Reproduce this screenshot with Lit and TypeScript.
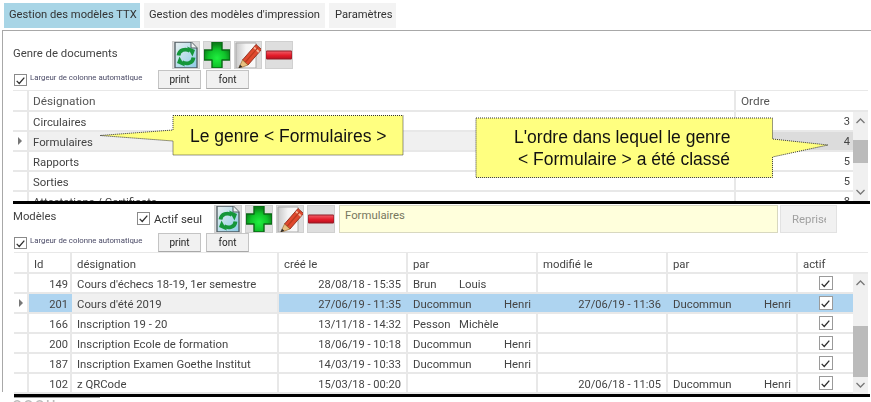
import { LitElement, html, css, svg } from "lit";
import { customElement } from "lit/decorators.js";

const refreshIcon = html`<svg viewBox="0 0 28 28" width="28" height="28">
  <defs><linearGradient id="pg" x1="0" y1="0" x2="1" y2="1"><stop offset="0" stop-color="#e9f0f0"/><stop offset="1" stop-color="#8ccbe6"/></linearGradient></defs>
  <path d="M3 1H19L25 7V27H3Z" fill="url(#pg)" stroke="#4f5a60" stroke-width="1.3"/>
  <path d="M19 1V7H25" fill="#eef2f2" stroke="#4f5a60" stroke-width="1"/>
  <path d="M6.5 14.5C7 9 13.5 7 18 10" fill="none" stroke="#15963a" stroke-width="3.8"/>
  <path d="M15 5.5L23 9L20.5 15.5Z" fill="#15963a"/>
  <path d="M21.5 16.5C21 22 14.5 24 10 21" fill="none" stroke="#15963a" stroke-width="3.8"/>
  <path d="M13 25.5L5 22L7.5 15.5Z" fill="#15963a"/>
</svg>`;
const plusIcon = html`<svg viewBox="0 0 28 28" width="28" height="28">
  <defs><radialGradient id="gp" cx=".5" cy=".62" r=".55"><stop offset="0" stop-color="#20f040"/><stop offset=".6" stop-color="#10c42a"/><stop offset="1" stop-color="#0b801a"/></radialGradient></defs>
  <path d="M9 1H19V9H27V19H19V27H9V19H1V9H9Z" fill="url(#gp)" stroke="#0b6a16" stroke-width="1.4" stroke-linejoin="round"/>
</svg>`;
const editIcon = html`<svg viewBox="0 0 28 28" width="28" height="28">
  <defs><linearGradient id="ep" x1="0" y1="0" x2="1" y2="0"><stop offset="0" stop-color="#c9c9c9"/><stop offset=".5" stop-color="#f4f4f4"/><stop offset="1" stop-color="#fafafa"/></linearGradient></defs>
  <path d="M2 2H22V27H2Z" fill="url(#ep)" stroke="#aaa"/>
  <path d="M8.5 19L22 3.5L27.5 8.5L14 24Z" fill="#e0492e" stroke="#8c2a18" stroke-width=".9"/>
  <path d="M20 6.5L25 11" stroke="#f6b49a" stroke-width="1.8"/>
  <path d="M11 21.5L24 6.5" stroke="#b93a1e" stroke-width="1.2"/>
  <path d="M8.5 19L14 24L4.5 27.5Z" fill="#e8c080" stroke="#8a5a20" stroke-width=".6"/>
  <path d="M4.5 27.5L6 23.8L8.3 25.7Z" fill="#2b2b2b"/>
</svg>`;
const minusIcon = html`<svg viewBox="0 0 28 28" width="28" height="28">
  <defs><linearGradient id="rd" x1="0" y1="0" x2="0" y2="1"><stop offset="0" stop-color="#f0606a"/><stop offset=".55" stop-color="#e41c2a"/><stop offset="1" stop-color="#b81020"/></linearGradient></defs>
  <rect x="1" y="10" width="26" height="8" rx="1" fill="url(#rd)" stroke="#8f1a24" stroke-width="1"/>
</svg>`;

const icons = [refreshIcon, plusIcon, editIcon, minusIcon];
const chevron = (up: boolean) => html`<svg viewBox="0 0 15 10" width="15" height="10"><path d=${up ? "M3.5 7L7.5 3L11.5 7" : "M3.5 3L7.5 7L11.5 3"} fill="none" stroke="#777" stroke-width="1.3"/></svg>`;
const check = html`<svg viewBox="0 0 13 13" width="11" height="11"><path d="M2 7L5 10L11 3" fill="none" stroke="#2e2e2e" stroke-width="1.5"/></svg>`;
const arrow = html`<svg viewBox="0 0 6 8" width="6" height="8"><path d="M1 0L5 4L1 8Z" fill="#777"/></svg>`;

const genres = [["Circulaires", "3"], ["Formulaires", "4"], ["Rapports", "5"], ["Sorties", "5"], ["Attestations / Certificats", "8"]];

type Row = { id: string; name: string; created: string; by: [string, string, boolean]; mod?: string; modBy?: boolean; sel?: boolean };
const rows: Row[] = [
  { id: "149", name: "Cours d'échecs 18-19, 1er semestre", created: "28/08/18 - 15:35", by: ["Brun", "Louis", false] },
  { id: "201", name: "Cours d'été 2019", created: "27/06/19 - 11:35", by: ["Ducommun", "Henri", true], mod: "27/06/19 - 11:36", modBy: true, sel: true },
  { id: "166", name: "Inscription 19 - 20", created: "13/11/18 - 14:32", by: ["Pesson", "Michèle", false] },
  { id: "200", name: "Inscription Ecole de formation", created: "18/06/19 - 10:18", by: ["Ducommun", "Henri", true] },
  { id: "187", name: "Inscription Examen Goethe Institut", created: "14/03/19 - 10:33", by: ["Ducommun", "Henri", true] },
  { id: "102", name: "z QRCode", created: "15/03/18 - 00:20", by: ["", "", false], mod: "20/06/18 - 11:05", modBy: true },
];

@customElement("app-root")
export class AppRoot extends LitElement {
  static styles = css`
    :host { display: block; width: 871px; height: 402px; overflow: hidden; background: #fff; position: relative;
      font-family: Roboto, "Open Sans", sans-serif; font-size: 11.35px; color: #444; }
    .page { width: 871px; height: 402px; position: relative; filter: blur(0.35px); }
    .tabs { display: flex; gap: 4px; padding: 3px 0 0 4px; height: 27px; box-sizing: border-box; }
    .tab { height: 25px; line-height: 24px; padding: 0 5px; background: #f3f3f3; color: #333; white-space: nowrap; box-sizing: border-box; font-size: 11.2px; }
    .tab.on { background: #a8d5e6; }
    .tab.w1 { width: 136px; } .tab.w2 { width: 181px; } .tab.w3 { width: 67px; padding-left: 6px; }
    .panel { margin: 3px 0 0 2px; border-top: 1px solid #a8a8a8; border-left: 1px solid #a8a8a8; padding: 10px 0 0 10px; height: 362px; box-sizing: border-box; position: relative; }
    .bar { display: flex; align-items: stretch; height: 29px; }
    .label { color: #444; }
    .lab1 { width: 159px; line-height: 25px; }
    .lab2 { width: 124px; line-height: 24px; }
    .icons { display: flex; gap: 3px; }
    .ib { width: 28px; height: 28px; background: #dedede; outline: 1px solid #d0d0d0; outline-offset: -1px; display: block; }
    .ib svg { display: block; }
    .opts { display: flex; height: 20px; }
    .opts.o2 { height: 19px; }
    .auto { width: 145px; display: flex; align-items: flex-start; gap: 3px; }
    .cb { width: 12px; height: 12px; border: 1px solid #8a8a8a; background: #fff; box-sizing: content-box; display: flex; align-items: center; justify-content: center; flex: none; }
    .auto .cb { margin: 4px 0 0 1px; width: 11px; height: 10px; }
    .auto span { font-size: 7.8px; line-height: 15px; color: #4a4a66; white-space: nowrap; }
    .btns { display: flex; gap: 5px; }
    .btn { width: 43px; height: 19px; background: #f1f1f1; border: 1px solid #c4c4c4; border-bottom-color: #a8a8a8; box-sizing: border-box; font-size: 10px; line-height: 17px; text-align: center; color: #222; }
    .g { display: flex; width: 855px; overflow: hidden; }
    .g1 { height: 111px; }
    .g2 { height: 142px; margin-left: 1px; width: 854px; }
    .tbl { flex: 1; min-width: 0; }
    .r { display: grid; height: 20px; line-height: 21px; border-bottom: 2px solid #e8e8e8; box-sizing: border-box; }
    .r.h { height: 22px; border-top: 1px solid #e8e8e8; }
    .g1 .r { line-height: 20px; grid-template-columns: 16px 707px 117px; }
    .g1 .r.h { line-height: 21px; font-size: 11.8px; }
    .g2 .r { grid-template-columns: 15px 43px 207px 129px 130px 130px 130px 55px; }
    .g2 .r.h { line-height: 23px; }
    .c { padding: 0 5px; border-right: 2px solid #e8e8e8; white-space: nowrap; overflow: hidden; box-sizing: border-box; }
    .g1 .c { padding-left: 4px; }
    .g1 .c.last { padding-left: 5px; }
    .c.num { text-align: right; padding-right: 5px; font-size: 11.1px; }
    .c.id { padding-right: 2px; }
    .g1 .c.num { padding-right: 3px; border-right: 0; }
    .c.ind { padding: 0; display: flex; align-items: center; justify-content: center; }
    .c.last { border-right: 0; }
    .g1 .h .c { color: #555; }
    .sel1 .c:not(.ind) { background: #f0f0f0; }
    .g1 .sel1 .c.num { background: #dcdcdc; }
    .sel2 .c:not(.ind) { background: #aed4f0; border-right-color: #aed4f0; }
    .sel2 .c.des { background: #f0f0f0; border-right-color: #e8e8e8; }
    .c.name { display: flex; }
    .c.name .a { min-width: 46px; }
    .c.name .b.end { margin-left: auto; }
    .c.chk { display: flex; align-items: center; justify-content: center; border-right: 0; }
    .c.chk .cb { border-color: #9a9a9a; }
    .sb { width: 15px; flex: none; display: flex; flex-direction: column; }
    .corner { border-top: 1px solid #e8e8e8; border-bottom: 2px solid #e8e8e8; box-sizing: border-box; flex: none; background: #fff; height: 22px; }
    .track { flex: 1; background: #f0f0f0; display: flex; flex-direction: column; justify-content: space-between; position: relative; align-items: center; padding: 4px 0; box-sizing: border-box; }
    .thumb { position: absolute; left: 0; right: 0; background: #bbbbbb; }
    .g1 .thumb { top: 28px; height: 23px; }
    .g2 .thumb { top: 52px; height: 51px; }
    .rule { height: 3px; background: #000; width: 857px; }
    .rule.r2 { margin-left: 1px; width: 856px; }
    .sec2 { display: flex; height: 29px; }
    .check2 { display: flex; gap: 4px; width: 77px; margin-top: 8px; align-items: flex-start; line-height: 14px; }
    .check2 .cb { width: 11px; height: 11px; }
    .check2 span { white-space: nowrap; color: #333; font-size: 11.5px; }
    .field { margin: 1px 0 0 4px; width: 439px; height: 28px; background: #ffffdc; border: 1px solid #d8d8c0; box-sizing: border-box; padding: 0 5px; line-height: 19px; color: #77775f; }
    .rep { margin: 1px 0 0 2px; width: 57px; height: 28px; border: 1px solid #e2e2e2; background: #f1f1f1; color: #a0a0a0; box-sizing: border-box; line-height: 26px; overflow: hidden; padding: 0 10px 0 11px; }
    .repin { display: block; overflow: hidden; white-space: nowrap; }
    .sec2 .icons { margin-top: 1px; }
    .foot { position: absolute; left: 12px; top: 395px; font-size: 18px; line-height: 18px; color: #bbb; letter-spacing: 1px; }
    .footline { position: absolute; left: 14px; top: 397px; width: 86px; height: 1px; background: #9a9a9a; }
    .call { position: absolute; left: 0; top: 0; pointer-events: none; }
    .call text { font-family: "Liberation Sans", Arial, sans-serif; font-size: 17.5px; fill: #111; }
  `;

  private check() { return html`<div class="cb">${check}</div>`; }

  private opts(cls = "") {
    return html`<div class="opts ${cls}">
      <div class="auto">${this.check()}<span>Largeur de colonne automatique</span></div>
      <div class="btns"><div class="btn">print</div><div class="btn">font</div></div>
    </div>`;
  }

  private icons() {
    return html`<div class="icons">${icons.map((i) => html`<div class="ib">${i}</div>`)}</div>`;
  }

  private scroll() {
    return html`<div class="sb"><div class="corner"></div>
      <div class="track"><div class="thumb"></div>${chevron(true)}${chevron(false)}</div></div>`;
  }

  render() {
    const callouts = svg`
      <path d="M173 115.5H403V155H173V141L100 135.5L173 130Z" fill="#ffff80" stroke="#333" stroke-width="1" stroke-dasharray="1 1"/>
      <path d="M476 118H772.5V139L828 145L772.5 157V177.5H476Z" fill="#ffff80" stroke="#333" stroke-width="1" stroke-dasharray="1 1"/>
      <text x="190" y="142">Le genre &lt; Formulaires &gt;</text>
      <text x="514" y="143">L'ordre dans lequel le genre</text>
      <text x="518" y="165">&lt; Formulaire &gt; a été classé</text>`;
    return html`<div class="page">
      <div class="tabs">
        <div class="tab on w1">Gestion des modèles TTX</div>
        <div class="tab w2">Gestion des modèles d'impression</div>
        <div class="tab w3">Paramètres</div>
      </div>
      <div class="panel">
        <div class="bar"><div class="label lab1">Genre de documents</div>${this.icons()}</div>
        ${this.opts()}
        <div class="g g1">
          <div class="tbl">
            <div class="r h"><div class="c ind"></div><div class="c">Désignation</div><div class="c last">Ordre</div></div>
            ${genres.map((g, i) => html`<div class="r ${i === 1 ? "sel1" : ""}">
              <div class="c ind">${i === 1 ? arrow : ""}</div><div class="c">${g[0]}</div><div class="c num">${g[1]}</div></div>`)}
          </div>
          ${this.scroll()}
        </div>
        <div class="rule"></div>
        <div class="sec2">
          <div class="label lab2">Modèles</div>
          <div class="check2">${this.check()}<span>Actif seul</span></div>
          ${this.icons()}
          <div class="field">Formulaires</div>
          <div class="rep"><span class="repin">Reprise</span></div>
        </div>
        ${this.opts("o2")}
        <div class="g g2">
          <div class="tbl">
            <div class="r h">
              <div class="c ind"></div><div class="c">Id</div><div class="c">désignation</div><div class="c">créé le</div>
              <div class="c">par</div><div class="c">modifié le</div><div class="c">par</div><div class="c last">actif</div>
            </div>
            ${rows.map((r) => html`<div class="r ${r.sel ? "sel2" : ""}">
              <div class="c ind">${r.sel ? arrow : ""}</div>
              <div class="c num id">${r.id}</div>
              <div class="c des">${r.name}</div>
              <div class="c num">${r.created}</div>
              <div class="c name"><span class="a">${r.by[0]}</span><span class="b ${r.by[2] ? "end" : ""}">${r.by[1]}</span></div>
              <div class="c num">${r.mod ?? ""}</div>
              <div class="c name">${r.modBy ? html`<span class="a">Ducommun</span><span class="b end">Henri</span>` : ""}</div>
              <div class="c chk">${this.check()}</div>
            </div>`)}
          </div>
          ${this.scroll()}
        </div>
        <div class="rule r2"></div>
      </div>
      <div class="foot">ooou</div>
      <div class="footline"></div>
      <svg class="call" width="871" height="402" viewBox="0 0 871 402">${callouts}</svg>
    </div>`;
  }
}
